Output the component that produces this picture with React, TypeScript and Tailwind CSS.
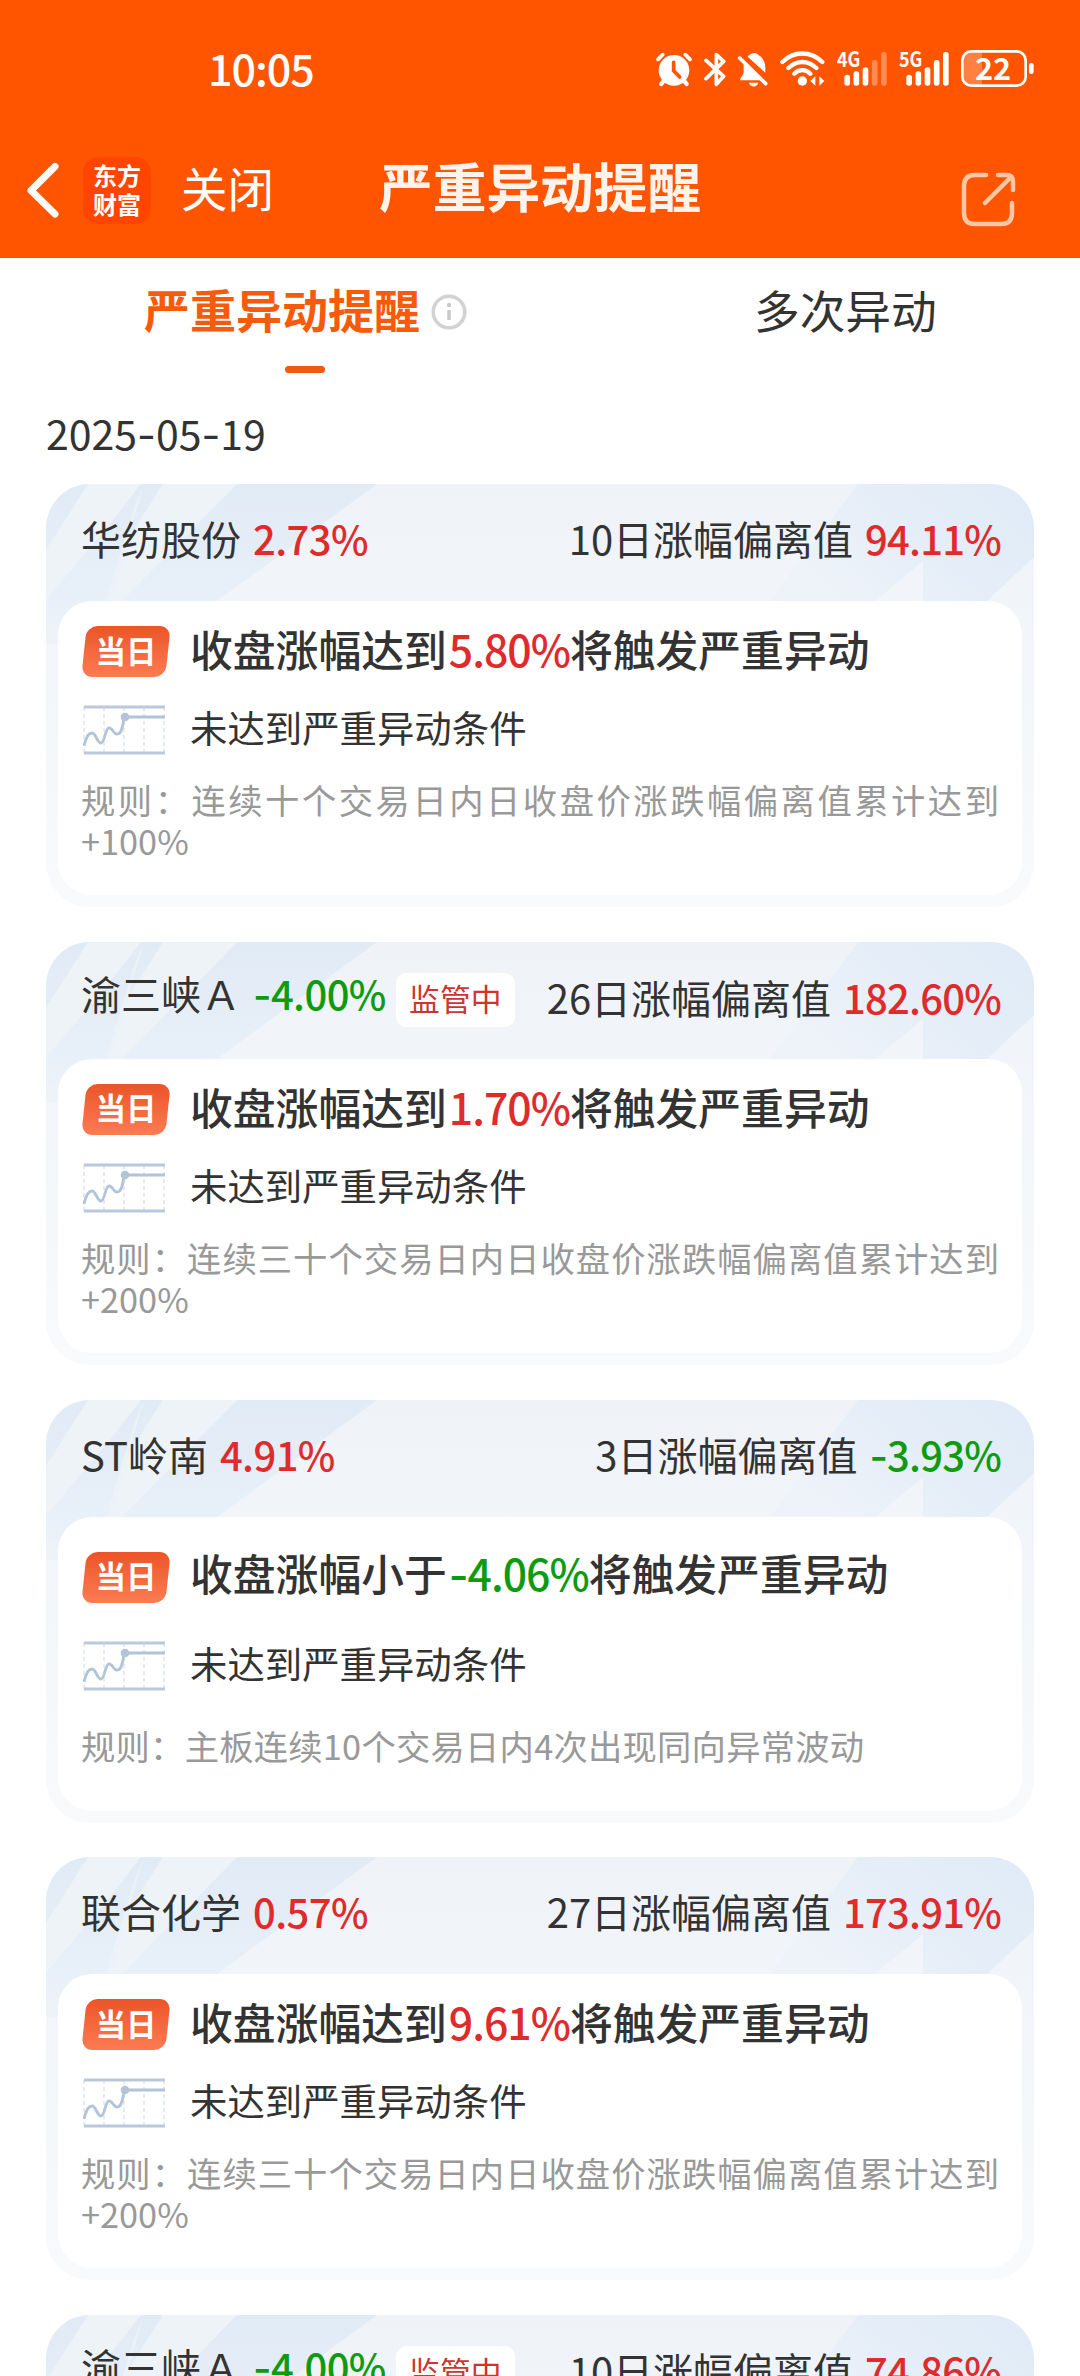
import React from "react";

const FONT = "font-['Noto_Sans_CJK_SC',sans-serif]";

type Stock = {
  name: string;
  change: string;
  up: boolean;
  watched?: boolean;
  days: string;
  deviation: string;
  deviationUp: boolean;
  verb: string;
  trigger: string;
  triggerUp: boolean;
  rule: string;
  short?: boolean;
};

const RULE_10 = "规则：连续十个交易日内日收盘价涨跌幅偏离值累计达到+100%";
const RULE_30 = "规则：连续三十个交易日内日收盘价涨跌幅偏离值累计达到+200%";

const stocks: Stock[] = [
  { name: "华纺股份", change: "2.73%", up: true, days: "10", deviation: "94.11%", deviationUp: true, verb: "达到", trigger: "5.80%", triggerUp: true, rule: RULE_10 },
  { name: "渝三峡Ａ", change: "-4.00%", up: false, watched: true, days: "26", deviation: "182.60%", deviationUp: true, verb: "达到", trigger: "1.70%", triggerUp: true, rule: RULE_30 },
  { name: "ST岭南", change: "4.91%", up: true, days: "3", deviation: "-3.93%", deviationUp: false, verb: "小于", trigger: "-4.06%", triggerUp: false, rule: "规则：主板连续10个交易日内4次出现同向异常波动", short: true },
  { name: "联合化学", change: "0.57%", up: true, days: "27", deviation: "173.91%", deviationUp: true, verb: "达到", trigger: "9.61%", triggerUp: true, rule: RULE_30 },
  { name: "渝三峡Ａ", change: "-4.00%", up: false, watched: true, days: "10", deviation: "74.86%", deviationUp: true, verb: "达到", trigger: "9.61%", triggerUp: true, rule: RULE_10 },
];

const tone = (up: boolean) => (up ? "text-[#e02b2d]" : "text-[#0f9b0f]");

/* Digits with the wider dash used by the interface for signs and dates. */
function Num({ value }: { value: string }) {
  return (
    <>
      {value.split(/(-)/).map((part, i) =>
        part === "-" ? (
          <span key={i} className="font-['Inter']">-</span>
        ) : (
          part
        ),
      )}
    </>
  );
}

function SignalBars({ label, lit }: { label: string; lit: number }) {
  const tops = [104, 94, 82, 60, 36];
  return (
    <svg className="h-[60px] w-[51px]" viewBox="0 0 153 180" fill="#fff">
      <text x="0" y="82" fontSize="62" fontWeight="700" fontFamily="Noto Sans CJK SC" textLength="70" lengthAdjust="spacingAndGlyphs">
        {label}
      </text>
      {tops.map((t, i) => (
        <rect key={t} x={22 + i * 27.5} y={t} width="17" height={137 - t} rx="8" opacity={i < lit ? 1 : 0.32} />
      ))}
    </svg>
  );
}

function StatusBar() {
  return (
    <div className="flex h-[100px] items-end pl-[208px]">
      <div className="mb-[3px] h-[60px] w-[448px] text-[43px] leading-[60px] font-medium tracking-[-1px] text-white">10:05</div>
      <svg className="h-[60px] w-[36px]" viewBox="48 0 108 180" fill="none" stroke="#fff" strokeLinecap="round">
        <circle cx="102" cy="91" r="46" fill="#fff" stroke="none" />
        <path d="M54 58L68 44M150 58L136 44" strokeWidth="11" />
        <path d="M72 122L64 132M132 122L140 132" strokeWidth="13" />
        <path d="M101 67V92L119 111" stroke="#ff5500" strokeWidth="11" />
      </svg>
      <svg className="ml-[12px] h-[60px] w-[22px]" viewBox="192 0 66 180" fill="none" stroke="#fff" strokeWidth="11" strokeLinecap="round" strokeLinejoin="round">
        <path d="M198 61L251 109L229 133V44L251 64L198 116" />
      </svg>
      <svg className="ml-[11px] h-[60px] w-[32px]" viewBox="292 0 96 180" fill="#fff">
        <path d="M312 68L366 121H302C300 114 310 109 312 97Z" />
        <path d="M324 50C334 36 350 36 357 46C370 52 377 68 377 84V98Z" />
        <path d="M328 128H356C352 143 332 143 328 128Z" />
        <path d="M300 54L378 131" stroke="#fff" strokeWidth="11" strokeLinecap="round" />
      </svg>
      <svg className="ml-[11px] h-[60px] w-[45px]" viewBox="419 0 135 180" fill="none" stroke="#fff" strokeWidth="13" strokeLinecap="round">
        <path d="M426 66C460 32 512 32 546 66M444 84C470 60 502 60 528 84M462 101C476 87 496 87 510 101" />
        <circle cx="486" cy="123" r="14" fill="#fff" stroke="none" />
        <path d="M510 123L525 109V137ZM552 123L537 109V137Z" fill="#fff" stroke="none" />
      </svg>
      <div className="ml-[12px] flex gap-[11px]">
        <SignalBars label="4G" lit={3} />
        <SignalBars label="5G" lit={5} />
      </div>
      <svg className="ml-[11px] h-[60px] w-[74px]" viewBox="360 0 222 180">
        <path d="M366 60Q366 37 388 37H423V134H388Q366 134 366 112Z" fill="#ff8040" />
        <rect x="364" y="34" width="190" height="103" rx="27" fill="none" stroke="#fff" strokeWidth="8" />
        <rect x="564" y="69" width="14" height="33" rx="7" fill="#fff" />
        <text x="456" y="119" textAnchor="middle" fontSize="92" fontWeight="700" fill="#fff" fontFamily="Noto Sans CJK SC">22</text>
      </svg>
    </div>
  );
}

function NavBar() {
  return (
    <div className="flex h-[158px] items-start text-white">
      <svg className="mt-[62px] ml-[26px] h-[56px] w-[33px]" viewBox="0 0 33 56" fill="none" stroke="#fff" strokeWidth="7" strokeLinecap="round" strokeLinejoin="round">
        <path d="M29 4.500L5 28.500L29 52" />
      </svg>
      <div className="mt-[57px] ml-[24px] flex h-[67px] w-[68px] flex-col items-center justify-center rounded-[15px] bg-[#ff4500] pb-[3px] text-[24px] leading-[29px] font-bold">
        <span>东方</span>
        <span>财富</span>
      </div>
      <div className="mt-[59px] ml-[30px] w-[198px] text-[46.500px] leading-[56px] whitespace-nowrap">关闭</div>
      <div className="mt-[55px] w-[324px] text-[53.700px] leading-[60px] font-bold whitespace-nowrap text-[#fff3ec]">严重异动提醒</div>
      <svg className="mt-[71px] ml-[257px] h-[58px] w-[58px]" viewBox="0 0 58 58" fill="none" stroke="#ffc6a6" strokeWidth="4.500" strokeLinecap="round" strokeLinejoin="round">
        <path d="M26 4H15Q4 4 4 15V42Q4 53 15 53H41Q52 53 52 42V32" />
        <path d="M38 4H46Q53 4 53 10V19M51 6L25 32" />
      </svg>
    </div>
  );
}

function CardBackdrop({ id }: { id: string }) {
  return (
    <svg className="absolute inset-0 h-[160px] w-[988px]" viewBox="0 0 988 160">
      <defs>
        <linearGradient id={`left-${id}`} x1="0" y1="0" x2="0" y2="1">
          <stop offset="0" stopColor="#e1ebf5" />
          <stop offset="0.750" stopColor="#e8f0f9" />
          <stop offset="1" stopColor="#eff4fa" />
        </linearGradient>
        <linearGradient id={`right-${id}`} x1="1" y1="0" x2="0" y2="0.500">
          <stop offset="0" stopColor="#dfebf7" />
          <stop offset="0.600" stopColor="#e6eef8" />
          <stop offset="1" stopColor="#eef3f9" />
        </linearGradient>
      </defs>
      <path fill={`url(#left-${id})`} d="M0 0H331L171 117L120 160H0Z" />
      <path fill="#eef3f8" d="M42 0H95L62 42L0 116V66Z" />
      <path fill="#eef3f8" d="M117 0H191L76 117L40 160H0V145L64 117L82 55Z" />
      <path fill="#eef3f8" d="M98 0L64 117L60 117L88 24Z" opacity="0.700" />
      <path fill={`url(#right-${id})`} d="M812 0H988V73L941 117H877V77L829 117H724Z" />
    </svg>
  );
}

function TodayBadge() {
  return (
    <div className="relative flex h-[51px] w-[88px] items-center justify-center">
      <div className="absolute inset-x-[2px] inset-y-0 -skew-x-[6deg] rounded-[11px] bg-gradient-to-b from-[#eb5427] to-[#fd7b52]" />
      <span className="relative -mt-[3px] text-[30.500px] leading-[51px] font-bold text-white">当日</span>
    </div>
  );
}

function TrendIcon() {
  return (
    <svg className="ml-[1px] h-[50px] w-[82px]" viewBox="0 0 82 50" fill="none">
      <path d="M1 2V48M21 2V48M41 2V48M61 2V48M81 2V48" stroke="#dde4ee" strokeWidth="1.500" strokeDasharray="4 3" />
      <path d="M1 2H82M1 48H82" stroke="#b9c8da" strokeWidth="3" />
      <path d="M1 41C3 32 6 28 9 28C13 28 14 38 18 38C22 38 22 23 26 23C30 23 30 29 34 29C39 29 40 20 41 12H82" stroke="#b1c4d8" strokeWidth="2.800" />
      <circle cx="42" cy="12" r="4.300" fill="#b1c4d8" />
    </svg>
  );
}

function StockCard({ stock, id }: { stock: Stock; id: string }) {
  return (
    <section className="relative flex h-[423px] shrink-0 flex-col overflow-hidden rounded-[44px] bg-gradient-to-b from-[#eff3f8] to-[#f8fafc] px-[12px] pb-[12px] text-[#333]">
      <CardBackdrop id={id} />
      <div className="relative flex h-[117px] shrink-0 items-start justify-between pr-[21px] pl-[23px] text-[40px] leading-[60px] whitespace-nowrap">
        <div className={`flex ${stock.watched ? "mt-[21px]" : "mt-[24px]"}`}>
          <span>{stock.name}</span>
          <span className={`ml-[12px] font-medium tracking-[-0.600px] ${tone(stock.up)}`}>
            <Num value={stock.change} />
          </span>
          {stock.watched && (
            <span className="mt-[10px] ml-[10px] h-[54px] w-[119px] rounded-[11px] bg-white text-center text-[30.800px] leading-[49px] text-[#cf3430]">监管中</span>
          )}
        </div>
        <div className={`flex ${stock.watched ? "mt-[25px]" : "mt-[24px]"}`}>
          <span>{stock.days}日涨幅偏离值</span>
          <span className={`ml-[12px] font-medium tracking-[-0.800px] ${tone(stock.deviationUp)}`}>
            <Num value={stock.deviation} />
          </span>
        </div>
      </div>
      <div className={`relative flex flex-1 flex-col rounded-[34px] bg-white px-[24px] ${stock.short ? "gap-[38px] pt-[35px]" : "gap-[28px] pt-[25px]"}`}>
        <div className="flex h-[51px] items-center gap-[20px] text-[42.800px] leading-[51px] font-medium whitespace-nowrap">
          <TodayBadge />
          <p className="-mt-[6px]">
            收盘涨幅{stock.verb}
            <span className={`ml-[2px] tracking-[-1px] ${tone(stock.triggerUp)}`}>
              <Num value={stock.trigger} />
            </span>
            将触发严重异动
          </p>
        </div>
        <div className="flex h-[50px] items-center gap-[25px] text-[37.400px] leading-[50px]">
          <TrendIcon />
          <p className="-mt-[6px]">未达到严重异动条件</p>
        </div>
        <p className={`-mt-[4px] -ml-[1px] w-[918px] text-justify text-[34.300px] leading-[41px] text-[#999] ${stock.short ? "tracking-[0.250px]" : ""}`}>{stock.rule}</p>
      </div>
    </section>
  );
}

export default function App() {
  return (
    <div className={`flex h-[2376px] w-[1080px] flex-col overflow-hidden bg-white ${FONT}`}>
      <header className="h-[258px] shrink-0 bg-[#ff5500]">
        <StatusBar />
        <NavBar />
      </header>
      <nav className="flex h-[116px] shrink-0">
        <div className="flex w-[540px] flex-col pl-[144px]">
          <div className="mt-[24px] flex items-center">
            <span className="-mt-[4px] mb-[4px] text-[46px] leading-[60px] font-bold text-[#f65b0b]">严重异动提醒</span>
            <svg className="ml-[11px] h-[36px] w-[36px]" viewBox="0 0 36 36" fill="none">
              <circle cx="18" cy="18" r="15.800" stroke="#d2d2d2" strokeWidth="3.500" />
              <path d="M18 16V26" stroke="#c8c8c8" strokeWidth="3.500" />
              <circle cx="18" cy="11" r="2.200" fill="#c8c8c8" />
            </svg>
          </div>
          <div className="mt-[24px] ml-[141px] h-[7px] w-[40px] rounded-full bg-[#ef5a10]" />
        </div>
        <div className="mt-[21px] w-[540px] pl-[214px] text-[45.700px] leading-[60px] text-[#333]">多次异动</div>
      </nav>
      <main className="flex flex-col gap-[34.750px] px-[46px]">
        <h2 className="-mb-[34.750px] h-[110px] pt-[28px] text-[41px] leading-[60px] text-[#333]">
          <Num value="2025-05-19" />
        </h2>
        {stocks.map((s, i) => (
          <StockCard key={i} stock={s} id={String(i)} />
        ))}
      </main>
    </div>
  );
}
